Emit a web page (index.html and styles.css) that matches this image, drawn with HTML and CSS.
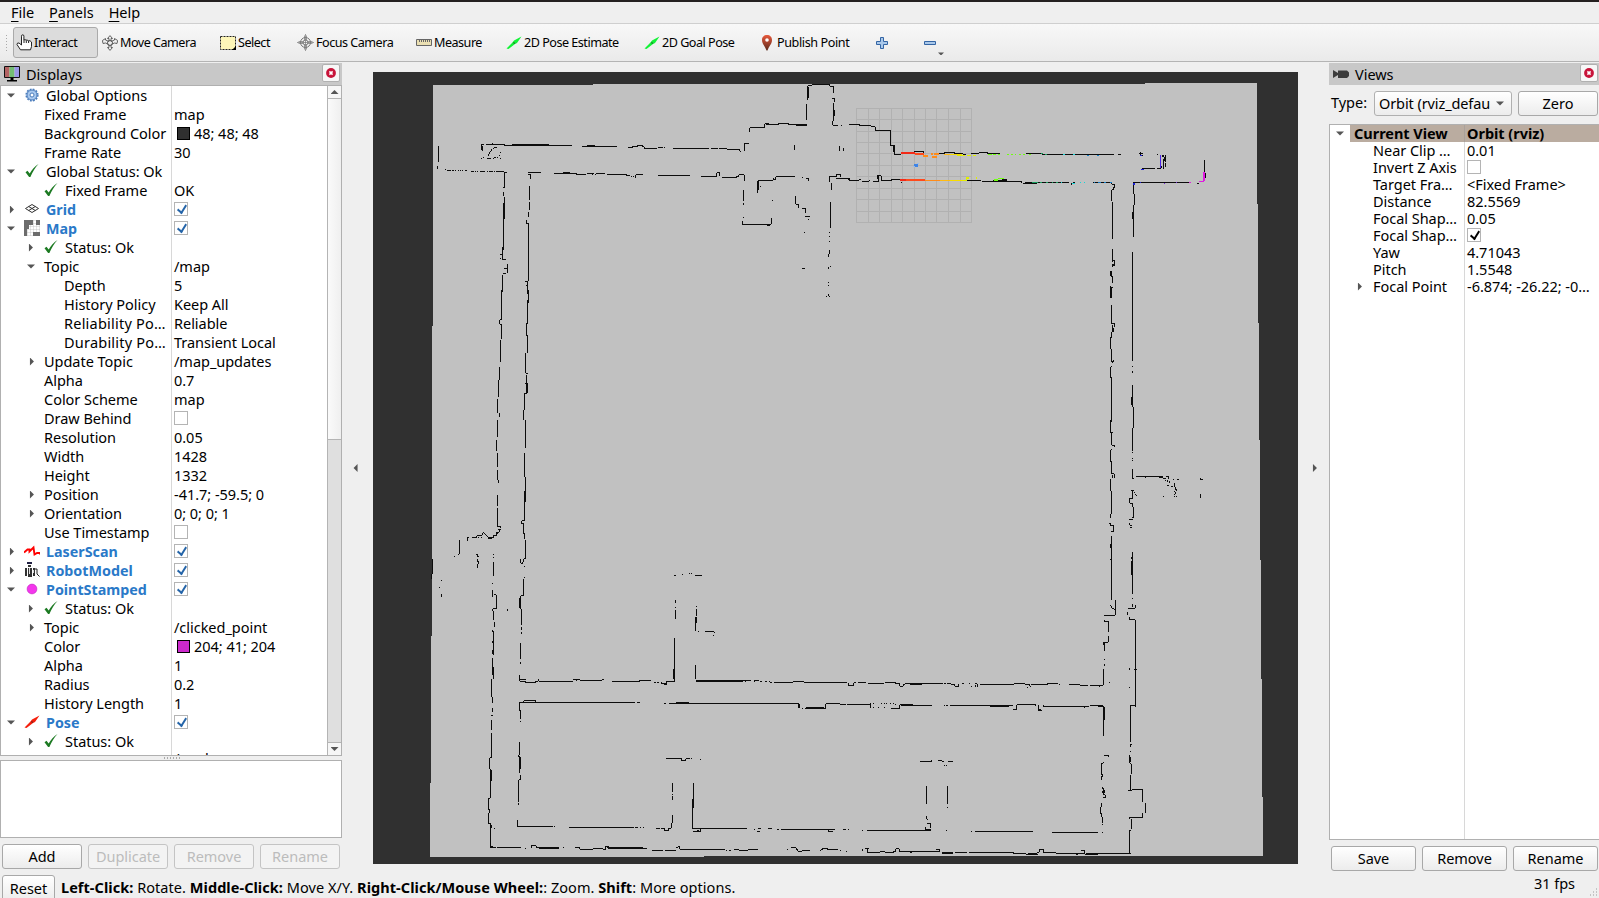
FILE: index.html
```html
<!DOCTYPE html>
<html lang="en">
<head>
<meta charset="utf-8">
<title>RViz</title>
<link rel="stylesheet" href="styles.css">
</head>
<body>
<svg class="defs" width="0" height="0">
  <defs>
    <symbol id="check" viewBox="0 0 14 14"><path d="M.5 8.200 2.500 6.800 4.700 9.600C7 5.500 9.500 2.500 13.500 0 9.800 4 7.500 8.200 5.400 13H4.100Z" fill="#1c7a22"/></symbol>
    <symbol id="close" viewBox="0 0 10 10"><circle cx="5" cy="5" r="4.900" fill="#c8143a"/><path d="M3.400 3.400 6.600 6.600M6.600 3.400 3.400 6.600" stroke="#fff" stroke-width="1.500"/></symbol>
    <symbol id="arrow" viewBox="0 0 16 16"><path d="M.5 13.500 6 8 8 5.500 15.500 1.500 11 8 9 9 2.500 14Z" fill="currentColor"/><path d="M7 7 9.500 8 8 9Z" fill="#222" opacity=".7"/></symbol>
    <linearGradient id="pin" x2="0" y2="1"><stop stop-color="#e8593c"/><stop offset="1" stop-color="#5c2a1c"/></linearGradient>
    <pattern id="cells" width="3" height="3" patternUnits="userSpaceOnUse"><path d="M0 0H3M0 0V3" stroke="#aaa" stroke-width=".6"/></pattern>
  </defs>
</svg>
<div class="app">
  <nav class="menu"><span><u>F</u>ile</span><span><u>P</u>anels</span><span><u>H</u>elp</span></nav>
  <div class="toolbar">
    <i class="grip"></i>
    <div class="tool interact active"><svg width="17" height="17" viewBox="0 0 17 17"><path d="M5.500 10V2.200Q5.500.8 6.700.8T7.900 2.200V6Q9 5 10 6.200 11.200 5.500 12.200 6.800 14 6 15.500 8V12.500L14.500 15.800H4.500L1 10.500Q1 8.500 3 9L5.500 11Z" fill="#fff" stroke="#222"/><path d="M8 6V9M10.300 6.500V9M12.600 7V9" stroke="#222"/></svg><span>Interact</span></div>
    <div class="tool move"><svg width="16" height="16" viewBox="0 0 16 16" fill="#eee" stroke="#555" stroke-width=".9"><path d="M8 .6 10.500 3.500H9V6.500L12.500 5V3.500L15.700 5.500 15 8.500 12.500 8 9 9.500V12.500H10.500L8 15.400 5.500 12.500H7V9.500L3.500 8 1 8.500.4 5.500 3.500 3.500V5L7 6.500V3.500H5.500Z"/><circle cx="8" cy="8" r="2.600" fill="none"/></svg><span>Move Camera</span></div>
    <div class="tool select"><svg width="16" height="14" viewBox="0 0 16 14"><path d="M.5 .5H15.500V13.500H.5Z" fill="#fdf6b8" stroke="#222" stroke-dasharray="2 1"/><path d="M16 10V14H12Z"/></svg><span>Select</span></div>
    <div class="tool focus"><svg width="17" height="17" viewBox="0 0 17 17" fill="none" stroke="#777"><circle cx="8.500" cy="8.500" r="5"/><circle cx="8.500" cy="8.500" r="2.500"/><path d="M8.500 0V17M0 8.500H17M7.500 1.500V6M9.500 1.500V6M7.500 11V15.500M9.500 11V15.500M1.500 7.500H6M1.500 9.500H6M11 7.500H15.500M11 9.500H15.500" stroke-width=".7"/></svg><span>Focus Camera</span></div>
    <div class="tool measure"><svg width="16" height="7" viewBox="0 0 16 7"><path d="M.5 .5H15.500V6.500H.5Z" fill="#eadfb2" stroke="#666"/><path d="M3.500 1V3M5.500 1V3M7.500 1V3M9.500 1V3M11.500 1V3M13.500 1V3" stroke="#666"/></svg><span>Measure</span></div>
    <div class="tool pose"><svg class="green" width="16" height="16"><use href="#arrow"/></svg><span>2D Pose Estimate</span></div>
    <div class="tool goal"><svg class="green" width="16" height="16"><use href="#arrow"/></svg><span>2D Goal Pose</span></div>
    <div class="tool publish"><svg width="10" height="16" viewBox="0 0 10 16"><path d="M5 0C8 0 10 2 10 5 10 9 7 11 5.500 15.500H4.500C3 11 0 9 0 5 0 2 2 0 5 0Z" fill="url(#pin)"/><circle cx="5" cy="5" r="1.800" fill="#fff"/></svg><span>Publish Point</span></div>
    <div class="tool plus"><svg width="12" height="12" viewBox="0 0 12 12"><path d="M4.500 .5H7.500V4.500H11.500V7.500H7.500V11.500H4.500V7.500H.5V4.500H4.500Z" fill="#a9c8ea" stroke="#3465a4"/></svg></div>
    <div class="tool minus"><svg width="20" height="24" viewBox="0 0 20 24"><path d="M.5 10.500H11.500V13.500H.5Z" fill="#a9c8ea" stroke="#3465a4"/><path d="M14 21.500H20L17 24.500Z" fill="#555"/></svg></div>
  </div>
  <main class="work">
    <section class="displays">
      <header class="title"><svg width="16" height="16" viewBox="0 0 16 16"><path d="M.5 .5H15.500V11.500H.5Z" fill="#ddd" stroke="#111"/><path d="M1 1H5.500V11H1Z" fill="#b46464"/><path d="M5.500 1H10.500V11H5.500Z" fill="#74be74"/><path d="M10.500 1H15V11H10.500Z" fill="#9a98e6"/><path d="M6.500 12H9.500V14H13V15.500H3V14H6.500Z"/></svg><span>Displays</span><b class="x"><svg width="10" height="10"><use href="#close"/></svg></b></header>
      <div class="treebox">
        <div class="tree">
          <div class="row l0"><i class="dn"></i><svg class="ic" viewBox="0 0 16 16"><circle cx="8" cy="8" r="5" fill="#a8c8ee" stroke="#4a7cbc" stroke-width="1"/><circle cx="8" cy="8" r="5.900" fill="none" stroke="#4a7cbc" stroke-width="1.400" stroke-dasharray="1.900 1.190"/><circle cx="8" cy="8" r="2" fill="#fff" stroke="#4a7cbc"/></svg><span>Global Options</span></div>
          <div class="row p1"><span>Fixed Frame</span><em>map</em></div>
          <div class="row p1"><span>Background Color</span><em><q class="sw dark"></q>48; 48; 48</em></div>
          <div class="row p1"><span>Frame Rate</span><em>30</em></div>
          <div class="row l0"><i class="dn"></i><svg class="ic ok"><use href="#check"/></svg><span>Global Status: Ok</span></div>
          <div class="row l1"><i></i><svg class="ic ok"><use href="#check"/></svg><span>Fixed Frame</span><em>OK</em></div>
          <div class="row l0 disp"><i class="rt"></i><svg class="ic" viewBox="0 0 16 16"><path d="M1.500 7.500 8 3.500 14.500 7.500 8 11.500ZM4.700 5.500 11.300 9.500M11.300 5.500 4.700 9.500" fill="none" stroke="#333" stroke-width="1"/></svg><span>Grid</span><em><q class="cb on"></q></em></div>
          <div class="row l0 disp"><i class="dn"></i><svg class="ic" viewBox="0 0 16 16"><path d="M0 0H16V16H0Z" fill="url(#cells)"/><path d="M0 0H9V5H5V9H3V16H0ZM12 0H16V5H12ZM9 12H16V16H9Z" fill="#6c6c6c"/></svg><span>Map</span><em><q class="cb on"></q></em></div>
          <div class="row l1"><i class="rt"></i><svg class="ic ok"><use href="#check"/></svg><span>Status: Ok</span></div>
          <div class="row p1"><i class="dn"></i><span>Topic</span><em>/map</em></div>
          <div class="row p2"><span>Depth</span><em>5</em></div>
          <div class="row p2"><span>History Policy</span><em>Keep All</em></div>
          <div class="row p2 wide"><span>Reliability Po…</span><em>Reliable</em></div>
          <div class="row p2 wide"><span>Durability Po…</span><em>Transient Local</em></div>
          <div class="row p1"><i class="rt"></i><span>Update Topic</span><em>/map_updates</em></div>
          <div class="row p1"><span>Alpha</span><em>0.7</em></div>
          <div class="row p1"><span>Color Scheme</span><em>map</em></div>
          <div class="row p1"><span>Draw Behind</span><em><q class="cb"></q></em></div>
          <div class="row p1"><span>Resolution</span><em>0.05</em></div>
          <div class="row p1"><span>Width</span><em>1428</em></div>
          <div class="row p1"><span>Height</span><em>1332</em></div>
          <div class="row p1"><i class="rt"></i><span>Position</span><em>-41.7; -59.5; 0</em></div>
          <div class="row p1"><i class="rt"></i><span>Orientation</span><em>0; 0; 0; 1</em></div>
          <div class="row p1"><span>Use Timestamp</span><em><q class="cb"></q></em></div>
          <div class="row l0 disp"><i class="rt"></i><svg class="ic" viewBox="0 0 16 16"><path d="M0 9.500 3.500 6.500H5.500V8.500L9.500 4.500 10.500 11.500 13 10H16V11.500" fill="none" stroke="#f00" stroke-width="1.900"/></svg><span>LaserScan</span><em><q class="cb on"></q></em></div>
          <div class="row l0 disp"><i class="rt"></i><svg class="ic" viewBox="0 0 16 16"><path d="M3 1H8" stroke="#224" stroke-width="2"/><path d="M4 3H7V5H4ZM1 6H3V14H1ZM4 6H8V15H4ZM9 6H11V14H9Z" fill="#333"/><path d="M11 7H13V12L15.500 14.500" fill="none" stroke="#222"/><path d="M5.500 6V12M9.500 8V11" stroke="#ddd"/></svg><span>RobotModel</span><em><q class="cb on"></q></em></div>
          <div class="row l0 disp"><i class="dn"></i><svg class="ic" viewBox="0 0 16 16"><circle cx="8" cy="8" r="4.900" fill="#f436ec" stroke="#c02cc0" stroke-width=".6"/></svg><span>PointStamped</span><em><q class="cb on"></q></em></div>
          <div class="row l1"><i class="rt"></i><svg class="ic ok"><use href="#check"/></svg><span>Status: Ok</span></div>
          <div class="row p1"><i class="rt"></i><span>Topic</span><em>/clicked_point</em></div>
          <div class="row p1"><span>Color</span><em><q class="sw mag"></q>204; 41; 204</em></div>
          <div class="row p1"><span>Alpha</span><em>1</em></div>
          <div class="row p1"><span>Radius</span><em>0.2</em></div>
          <div class="row p1"><span>History Length</span><em>1</em></div>
          <div class="row l0 disp"><i class="dn"></i><svg class="ic red"><use href="#arrow"/></svg><span>Pose</span><em><q class="cb on"></q></em></div>
          <div class="row l1"><i class="rt"></i><svg class="ic ok"><use href="#check"/></svg><span>Status: Ok</span></div>
          <div class="row p1 last"><em>/goal_pose</em></div>
        </div>
        <div class="scroll"><b class="up"></b><b class="thumb"></b><b class="down"></b></div>
      </div>
      <div class="split"></div>
      <div class="desc"></div>
      <div class="btns"><button>Add</button><button disabled>Duplicate</button><button disabled>Remove</button><button disabled>Rename</button></div>
    </section>
    <div class="fold"><i class="lf"></i></div>
    <svg class="view" viewBox="373 72 925 792" shape-rendering="crispEdges">
      <path d="M373 72H1298V864H373Z" fill="#303030"/>
      <path d="M433.300 84.800 1256.500 83.300 1259.500 440 1263 855.500 430 857 431.500 640Z" fill="#c1c1c1"/>
      <g transform="translate(800 70) scale(.33333)" fill="none" stroke="#b1b1b1" stroke-width="3">
        <path d="M170 115V458M205 115V458M238 115V458M274 115V458M308 115V458M343 115V458M377 115V458M411 115V458M446 115V458M481 115V458M515 115V458M170 115H516M170 149H516M170 184H516M170 218H516M170 252H516M170 287H516M170 321H516M170 355H516M170 389H516M170 425H516M170 458H516"/>
      </g>
      <g fill="none" stroke="#0c0c0c" stroke-width="3">
        <g transform="translate(420 70) scale(.33333)">
          <path d="M56 228V277M53 288V297M76 300h3M82 301h10M97 301h4M106 301h3M114 301h3M119 301h3M127 301h3M136 301h6M152 304h10M166 304h3M172 304h3M179 304h15M200 304h4M208 304h10M221 304h4M229 304h22M251 307h9"/>
          <path d="M184 240V224H193M199 224H254M188 228V242M216 221h4M184 265h3M188 262h3M232 230 218 236 208 248 205 259M202 265h10M218 265h4M222 262h6M232 262h3M240 265h3M236 256h3M240 247h3"/>
          <path d="M252 226H456M277 223H386M486 229H591M501 226H525M624 232H638V229H654V226H668V230H673V235H712M715 232H729M732 234h3M759 235H866M873 235H894M898 235H922M921 238H958V244M960 244h3M973 244V221H987"/>
          <path d="M253 310V353H248M251 366v12M253 381V446M250 400V540M247 532V570M241 553H247M241 566h3M250 570H257M262 583V608M252 596H262M248 611H257M247 614V665M244 660V720"/>
          <path d="M324 307H363M324 314H332V326M328 348V390M328 396V420M325 425V440M320 450V461H326V634M316 634H323V646H317M322 646V672M325 660V698M323 690V720"/>
          <path d="M402 310H471V314H499M430 308H450M501 311H521M516 314h4M524 314h4M529 311H555M561 314H620M619 317h10M633 319h3M638 319h5M648 323V315H669M714 317H810M843 319H890V309H900V319M905 322H950V319H957V315H973V332M970 360V392M970 398V404M970 440v4M967 453V463H1054V445M1041 466h9"/>
          <path d="M989 187V173H1034V161H1046M1037 163H1076V160H1106V164H1160M1128 166H1160M1160 102V150M1163 90V48H1175V44H1229V49H1240V68M1165 50V85M1236 87H1244V97M1240 100V154M1243 121V137M1238 154V166H1253M1263 166h4M1286 165h4M1124 225V239M1259 228V242M1270 234V242"/>
          <path d="M1013 368V332H1058V329H1067V321H1073V320H1124M1016 332V360M1061 325V331M1020 350h3M1145 322h4M1157 325H1165V332M1056 391h4M1128 378V403H1136V413M1146 415H1157V428M1155 440H1169M1164 448h3M1152 487h4M1147 593V596H1155M1229 336V319H1250V313H1262V322M1249 325H1290M1234 340V360M1231 396V474M1228 485v5M1228 498v3M1228 512v3M1228 541v10M1227 553v9M1226 590V597M1231 590h3M1226 636v3M1226 645v3M1219 679h3M1226 673v6H1229"/>
        </g>
        <g transform="translate(420 310) scale(.33333)">
          <path d="M244 0V30H240V43H244V87M241 90V155M239 170V210H236V261M234 268V310M238 310V320M234 330V382M231 390V422M234 430V470M232 480V510M322 0V42M319 40V78H323V128M318 130V190H323M320 195V250M316 220H322V250H314V300M311 300V330M317 330V390M316 390V415M314 430V500M317 500V515"/>
        </g>
        <g transform="translate(420 480) scale(.33333)">
          <path d="M235 0V8M233 45V78M233 85V140H242V145M238 151V157H230V168H220V174H208L190 158 184 168H170V174H160V172H155M142 182V174H147M173 174h3M182 174h3M205 176H216M228 160H234M235 150H242M118 180V223H114M102 229h3M168 225H173V230H176M173 236V246H176V252M173 252V264M38 237V282H35V296M64 299v3M57 322h3M64 342V350M221 222v3M221 230v3M221 246V287M218 309v4M218 330V350M221 344H229V387H219V392M222 392V420M224 427V440M215 453H220V526M218 450V457M218 483v7M218 510v12M218 535V560M217 548V585M220 560V598M216 598V650M217 650V670M217 683V697M212 706H219M214 720V750M215 758V833H209V866M212 866V902M214 870V902M211 902V955H206V990H210V998M206 998V1032H212V1100M214 1035v10M222 1045h3M209 1100H220V1105M211 1098V1105"/>
          <path d="M317 0V66M314 33V122H305V132H311V150M311 145V162M314 160V176M317 180V236H311V245M302 237V250H309V246M313 258v3M313 291v3M311 298V348H302V388M299 355V385M305 388V436M305 440V449M305 457v4M301 490V536M302 546v6M262 387v6M299 585V604H318V608H346V604H355V598M299 600H317M357 604H460M459 600H480M471 598V602M480 601H500M490 603H545V599H553M576 604H660V601H692M703 609h5M712 609h5M726 605V612H740V604H764M733 615h8M763 475V604M760 568v30M766 360v10M766 380v4M766 390V416M762 286h5M786 284h3M807 281h4M813 281h3M825 286H846M829 378v4M829 386V408M827 412V453M829 412V430M834 455h3M855 455H883V460M880 464v3M827 555V596M827 602H992M827 606H968M974 605h4M1003 605V602H1016M1021 605h4M1034 605h6M1046 605h3M1051 608h4M1062 607H1118V605H1152V607H1260M1213 609H1250"/>
          <path d="M299 690V667H645M312 665V662H347V667M651 667h9M543 669h4M733 670h5M746 670H1137V684H1141M768 667H806M817 668v3M1139 672V685M1147 685h3M1154 685H1218V672H1260M1158 683H1212M299 666V693H302V718M302 722v4M298 786V826H295V830H300V868H296M301 830V868M298 860V880M301 885V900H296V967M296 970v4M293 1020V1040H399M402 1040h3M447 1042H641M645 1042h10M659 1042h3M668 1042h4M708 1045h12M724 1046H735V1052H747V1045H754V1030H757V1005M757 910V935M757 942v4M757 949V960M821 909v6M821 915V983M818 958V1046M820 1046H980M820 1054H843V1048M832 1051h5M1003 1047v4M1010 1054h10M1014 1046h10M1044 1046h11M1071 1048h6M1083 1048H1246M1226 1048V1056H1240M738 836H785V842H797V836H809M813 836h3M840 839h3"/>
          <path d="M212 1102H228M232 1102H302M314 1105h4M334 1105V1098H349V1103H416M356 1105H416M429 1102h3M466 1103H480V1108H518V1106H548V1108H558V1099H567V1106H680M560 1104H670M697 1111H728M736 1111H767M768 1104H773V1100H780V1108H914M918 1111h3M926 1111h6M943 1108H956V1111H985V1108H1013M1102 1108h3M1113 1103H1129V1110H1133V1114H1147M1147 1112H1170M1202 1114V1110H1208V1105H1222V1110H1253"/>
        </g>
        <g transform="translate(800 70) scale(.33333)">
          <path d="M147 164H180V167H214V170H226V181H271V226H283V253H302M272 222V226M280 226V245M342 245H372V250M417 252H433V248H464V251H490V253H498M512 253V251H537V248H563V252H600M678 251H726V253H745M738 254H942M953 254H963M1018 250H1030M1020 256H1028M1022 247V258M1072 254h3M1087 254V261M1090 256V262M1096 256V276M1090 268V296M1093 262V274M1096 280V292M1086 288V294M1026 297H1065M1070 296H1084M1214 270V308M1216 308V324M1192 340H1198"/>
          <path d="M144 328H150V332H178M178 330H184M186 334H207M209 329V334M219 334H236V318H244V332H276V328H300M232 328V318H242M302 337h4M340 333H480M470 332H515V334M515 331H542M546 336H600V334H612M580 332H620M605 328H620M612 336H665V340M668 340H712M676 338H806M814 344V338M820 338h6M880 338H936V343H945V353H940V359H935V392M937 395V508M937 536V575M943 570V584H937V590M933 604V618H937V635M937 625V635M933 648V685M935 705V720M1000 338H1172M1000 340V372H1003V406H1000V500M997 425V446M997 546V720"/>
        </g>
        <g transform="translate(1080 260) scale(.33333)">
          <path d="M95 0H103V18H97M94 33V50H97V68M94 80V115M98 80v4M94 135V190H103V200M98 195V215M100 205V215M95 215V232H92V267H94V304H102V300M98 304V310M94 318V322H92V353M95 350V485M91 480V518H98M95 518V556H104V562M95 570H92V605M95 604V642H103V653M99 645V653M91 657V694M95 694V762M91 762V773M88 790H93V798H101V814H94M95 827V1020M91 852V865M91 898v3"/>
          <path d="M157 0V304M157 318v3M157 333v6M157 375V440M155 411V434M160 441V505M157 505V573M157 576v3M157 594v4M157 600v3M157 628V655H161M168 650H250M195 653h4M237 653H248M248 656H258M254 661h3M258 650H266V656M263 661v4M268 664v5M260 676h8M272 679h6M279 658h4M291 658h6M283 668V680M286 680V690H291V694M283 694v3M288 697v4M283 701v3M283 710h3M289 710h3M250 711h3M361 653V658H368M361 702v5M361 709v5M153 692H161M158 692V715H149V730H158V740M163 696v3M166 702v3M168 708h3M160 740V773H155M148 780H158M149 790V796H155M149 804H156M157 876V1001M154 892V896M155 903V946M157 1014v3"/>
        </g>
        <g transform="translate(840 560) scale(.33333)">
          <path d="M815 0V120M811 134 817 145 827 150M828 121V166M826 121V155M793 167H825M793 180V184H805V215M805 228V247H791V255M794 250V272M794 298v3M794 313v5M790 328V376M750 376H790M778 376V382M808 367h3M878 0V101M875 4V45M878 114v3M878 132V142M865 145H886V136M863 155V165M868 170V180H886V436H871V545M888 261v4M888 282V298M883 329H891M868 324v6M888 360v7M888 378v3M868 380v4M886 430V440"/>
          <path d="M0 368H20M26 368V378H40V370M43 368h6M55 368H78M83 370H133M135 368H167V371H180V379H190V373H195M195 371H310M210 374H245M313 371h4M322 371h10M334 374H345V379H357V372M367 371h4M388 371h3M392 379h3M405 372H412V381M406 376V382M421 373H523V371H556V375H570V379H572M560 382h3M572 373H624V370H653M656 373h3M688 373H720V376H745M0 434H17M20 434H91M93 430V444M98 442h5M99 432h3M123 430h3M131 430h3M139 430h3M150 430h3M158 430h3M166 432v4M115 444h3M132 444h3M154 445H179V434H220M182 438H210M185 436H276M312 436h3M318 436h7M331 436H520M450 439H507M519 448H530V434H587V438M595 435V451H605M595 448H604M608 437H612V440H748M751 437H790M774 439H791V527M794 442V480M733 442h3"/>
          <path d="M871 554H876M871 554V561M871 574v3M868 586V610M871 590V606M871 612H874V643M871 645V690M865 692H875V690H908V726M916 729V758M908 759V772H868V778M875 778V806M874 811H869V880M791 586H805V591M790 607V610H785V644H788V650M785 648V660M785 680 790 690 786 698M790 684V704H796V714H790M795 690V700M786 728V740H783V762M785 760V772H788V790M786 794h3M241 604H276V600M294 601H305V604H312M325 604H338M313 616h3M319 616h3M260 678V731M323 678V731M323 741v3M260 768V775L264 780M262 790H271V803M258 800V809H274M10 808h4M16 808h3M24 808h3M67 811h3M81 811H272M319 811h3M393 814h4M405 814H579M636 817H774M786 817h4"/>
          <path d="M0 873h4M17 874h3M69 868V872M75 866H86M82 866V877H121V874H134V877H161V874H167V866H178V874H299V868H288M210 877H216M306 878H338M306 880H338M345 879H380V877M374 879H382M386 877H522V882H542M528 880H557V883H593M565 880H592V877H598V869H612V879H648M648 880H733M709 883h5M723 873H735V883H773M738 881H774M774 880H872"/>
        </g>
      </g>
      <g transform="translate(800 70) scale(.33333)" fill="none" stroke-width="6">
        <path d="M303 249H345M300 330H322" stroke="#f22a18"/><path d="M345 252H372M318 331H375" stroke="#ff4a1c"/><path d="M369 258H384M392 252H400M397 261H412M402 252H417M375 332H420" stroke="#ff8c1a" stroke-width="5"/><path d="M432 254H450M420 332H450" stroke="#ffbb12" stroke-width="5"/><path d="M450 254H485M450 332H485" stroke="#f8dc00" stroke-width="5"/><path d="M470 257H494M500 257H514M518 257H527M485 332H500V324H508M530 321v7" stroke="#e2f000" stroke-width="4"/>
        <path d="M564 254h12M580 254h4M586 254h3M593 254h6M620 254h6M633 254h5M645 254h4M657 254h6M670 254h6M686 254h6M582 330h12M594 325H612" stroke="#70ff10" stroke-width="4"/><path d="M724 251h6M734 253h8M695 337H715M720 337h5M738 337h5M755 337h5M768 337h5" stroke="#169c5c" stroke-width="3"/><path d="M790 254h4M820 254h4M782 337h5M817 340h7M839 338h5M851 338h5" stroke="#18d5d8" stroke-width="3"/><path d="M862 256h4M892 257h4M882 338h4M895 338h7M913 338h6M930 338h6" stroke="#1880c8" stroke-width="3"/>
        <path d="M1019 256h8M1024 299h7M1002 338V344M1020 338h4" stroke="#1c20d8" stroke-width="4"/><path d="M1082 256V294" stroke="#4a20e8" stroke-width="5"/><path d="M1092 340h4M1128 338h4" stroke="#7427d8" stroke-width="3"/><path d="M1168 339h5M1198 336H1211" stroke="#e01be0" stroke-width="3"/><path d="M1213 306V334" stroke="#e01be0" stroke-width="6"/><path d="M341 286H355" stroke="#3d83e6" stroke-width="9"/><path d="M340 290h5M352 281h4" stroke="#9bbce8" stroke-width="3"/>
      </g>
    </svg>
    <div class="fold"><i class="rt"></i></div>
    <section class="views">
      <header class="title"><svg width="16" height="8" viewBox="0 0 16 8"><path d="M0 0 5 3V0.500H14L16 2.500V6L14 8H5V5L0 8Z" fill="#3c3c3c"/></svg><span>Views</span><b class="x"><svg width="10" height="10"><use href="#close"/></svg></b></header>
      <div class="type"><span>Type:</span><div class="combo"><span>Orbit (rviz_defau</span><i class="dn"></i></div><button>Zero</button></div>
      <div class="vtree">
        <div class="row cur"><i class="dn"></i><span>Current View</span><em>Orbit (rviz)</em></div>
        <div class="row"><span>Near Clip …</span><em>0.01</em></div>
        <div class="row"><span>Invert Z Axis</span><em><q class="cb"></q></em></div>
        <div class="row"><span>Target Fra…</span><em>&lt;Fixed Frame&gt;</em></div>
        <div class="row"><span>Distance</span><em>82.5569</em></div>
        <div class="row"><span>Focal Shap…</span><em>0.05</em></div>
        <div class="row"><span>Focal Shap…</span><em><q class="cb on blk"></q></em></div>
        <div class="row"><span>Yaw</span><em>4.71043</em></div>
        <div class="row"><span>Pitch</span><em>1.5548</em></div>
        <div class="row"><i class="rt"></i><span>Focal Point</span><em>-6.874; -26.22; -0…</em></div>
      </div>
      <div class="btns"><button>Save</button><button>Remove</button><button>Rename</button></div>
    </section>
  </main>
  <footer class="status"><button>Reset</button><p><b>Left-Click:</b> Rotate. <b>Middle-Click:</b> Move X/Y. <b>Right-Click/Mouse Wheel:</b>: Zoom. <b>Shift</b>: More options.</p><span class="fps">31 fps</span><svg class="sizer" width="9" height="9" viewBox="0 0 9 9"><path d="M7 1h1M7 4h1M4 4h1M7 7h1M4 7h1M1 7h1" stroke="#999"/></svg></footer>
</div>
</body>
</html>
```
FILE: styles.css
```css
* { box-sizing: border-box; }
body { margin: 0; overflow: hidden; background: #efefef; color: #000; font-family: "Noto Sans", "Open Sans", sans-serif; font-size: 14.500px; letter-spacing: -.03px; }
svg { display: block; flex: none; }
.defs { position: absolute; }
i { flex: none; }
.app { width: 1599px; height: 898px; border-top: 2px solid #242020; display: flex; flex-direction: column; overflow: hidden; }

.menu { height: 22px; display: flex; align-items: center; gap: 15px; padding: 0 0 2px 11px; border-bottom: 1px solid #cfcfcf; }
.menu u { text-underline-offset: 3px; text-decoration-thickness: 1px; }

.toolbar { height: 38px; display: flex; align-items: center; font-size: 12.600px; letter-spacing: -.5px; background: linear-gradient(#f8f8f8, #eaeaea); border-bottom: 1px solid #b4b4b4; }
.grip { width: 4px; height: 17px; margin: 0 4px 0 5px; background: radial-gradient(circle, #aaa 35%, transparent 40%) 0 0 / 3px 3px; }
.tool { height: 31px; display: flex; align-items: center; gap: 2px; white-space: nowrap; }
.interact { width: 85px; padding-left: 2px; gap: 1px; letter-spacing: -.35px; }
.active { border: 1px solid #aaa; border-radius: 3px; background: #dcdcdc; }
.move { width: 118px; margin-left: 4px; }
.select { width: 77px; }
.focus { width: 119px; }
.measure { width: 90px; }
.pose { width: 138px; }
.goal { width: 118px; }
.publish { width: 114px; gap: 5px; letter-spacing: -.4px; }
.plus { width: 48px; }
.green { color: #12f336; }
.red { color: #f51f0c; }

.work { height: 811px; display: flex; padding-top: 1px; flex: none; }
.title { height: 22px; display: flex; align-items: center; padding: 0 2px 0 4px; gap: 6px; background: #c8c8c8; }
.x { width: 18px; height: 18px; margin: -3px 0 0 auto; border: 1px solid #b0b0b0; border-radius: 2px; background: #f7f7f7; display: grid; place-items: center; }
.displays { width: 342px; flex: none; display: flex; flex-direction: column; }
.treebox { height: 671px; border: 1px solid #b0b0b0; background: #fff; display: flex; overflow: hidden; }
.tree { width: 326px; background: linear-gradient(#d8d8d8, #d8d8d8) 170px 0 / 1px 100% no-repeat; }
.row { display: flex; align-items: center; white-space: nowrap; height: 19px; line-height: 19px; position: relative; }
.row em { font-style: normal; display: flex; align-items: center; position: absolute; left: 173px; }
.l0 { padding-left: 6px; }
.l0 > i, .l1 > i { width: 8px; margin-right: 9px; }
.l1 { padding-left: 25px; }
.l0 > span, .l1 > span { margin-left: 6px; }
.ic { width: 16px; height: 16px; margin-top: -2px; }
.ok { padding: 1px; }
.p1 { padding-left: 43px; }
.p1 > i { margin-left: -17px; margin-right: 9px; }
.p2 { padding-left: 63px; }
.wide > span { letter-spacing: .22px; }
.last em { top: -2px; }
.disp > span { font-weight: 700; color: #2a79c8; font-size: 14.300px; letter-spacing: 0; }
.dn, .rt, .lf { width: 8px; height: 8px; background: #555; clip-path: polygon(0 25%, 100% 25%, 50% 75%); }
.rt { clip-path: polygon(37% 0, 87% 50%, 37% 100%); }
.lf { clip-path: polygon(63% 0, 13% 50%, 63% 100%); }
.cb { width: 14px; height: 14px; border: 1px solid #b4b4b4; background: #fff; quotes: none; margin-top: -2px; display: block; position: relative; }
.cb.on::after { content: ""; position: absolute; left: 3.500px; top: 0; width: 4px; height: 8px; border: solid #2464a8; border-width: 0 2px 2px 0; transform: rotate(32deg) skewY(8deg); }
.cb.blk::after { border-color: #000; }
q::before, q::after { content: none; }
.sw { width: 13px; height: 13px; border: 1px solid #000; margin: -1px 4px 0 3px; display: block; }
.dark { background: #303030; }
.mag { background: #cc29cc; }
.scroll { width: 14px; display: flex; flex-direction: column; background: #dfdfdf; border-left: 1px solid #b4b4b4; }
.up, .down { height: 13px; background: #f6f6f6; display: grid; place-items: center; }
.up { border-bottom: 1px solid #b4b4b4; }
.down { margin-top: auto; border-top: 1px solid #b4b4b4; }
.up::after, .down::after { content: ""; width: 8px; height: 4px; background: #555; clip-path: polygon(0 100%, 50% 0, 100% 100%); }
.down::after { clip-path: polygon(0 0, 100% 0, 50% 100%); }
.thumb { height: 341px; background: linear-gradient(90deg, #fafafa, #efefef); border-bottom: 1px solid #b4b4b4; }
.split { height: 4px; width: 17px; margin-left: 163px; background: radial-gradient(circle, #aaa 35%, transparent 40%) 0 0 / 3px 4px; }
.desc { height: 78px; border: 1px solid #b0b0b0; background: #fff; }
.btns { display: flex; gap: 6px; padding: 6px 2px 0; }
button { font: inherit; letter-spacing: inherit; color: #000; height: 25px; flex: 1; padding: 0 0 2px; line-height: 20px; border: 1px solid #a8a8a8; border-radius: 3px; background: linear-gradient(#fff, #ececec); }
button:disabled { color: #bcbcbc; border-color: #c4c4c4; background: #f3f3f3; }

.fold { width: 31px; flex: none; display: flex; align-items: center; justify-content: center; padding-right: 2px; }
.fold .rt { margin-left: 3px; }
.view { width: 925px; height: 792px; margin-top: 9px; }
.views { width: 270px; flex: none; display: flex; flex-direction: column; }
.views .title { padding-right: 1px; }
.type { height: 39px; display: flex; align-items: flex-start; padding: 6px 1px 0 2px; gap: 6px; line-height: 23px; }
.type > span { width: 37px; white-space: nowrap; }
.combo { width: 138px; height: 25px; display: flex; align-items: center; padding: 0 7px 0 4px; gap: 6px; border: 1px solid #b0b0b0; border-radius: 3px; background: linear-gradient(#fff, #ececec); }
.combo span { width: 112px; overflow: hidden; white-space: nowrap; letter-spacing: -.1px; }
.vtree { height: 716px; border: 1px solid #b0b0b0; border-right: 0; background: linear-gradient(#d8d8d8, #d8d8d8) 134px 0 / 1px 100% no-repeat #fff; }
.vtree .row { height: 17px; line-height: 17px; padding-left: 43px; }
.vtree .row > i { margin-left: -18px; margin-right: 10px; }
.vtree .row em { left: 137px; }
.vtree .cb { margin-top: -1px; }
.vtree .cur { padding-left: 24px; font-weight: 700; background: linear-gradient(90deg, #fff 20px, #baaca0 20px, #baaca0 134px, #aaa19a 134px, #aaa19a 135px, #baaca0 135px); font-size: 14.500px; }
.views .btns { padding-right: 1px; }

.status { height: 24px; flex: none; display: flex; padding: 2px 1px 0 2px; line-height: 24px; white-space: nowrap; }
.status button { width: 53px; height: 27px; flex: none; line-height: 24px; }
.status p { margin: 0 0 0 6px; letter-spacing: .05px; }
.fps { margin: -4px 15px 0 auto; }
.sizer { margin: 13px 0 0 -1px; }
```
